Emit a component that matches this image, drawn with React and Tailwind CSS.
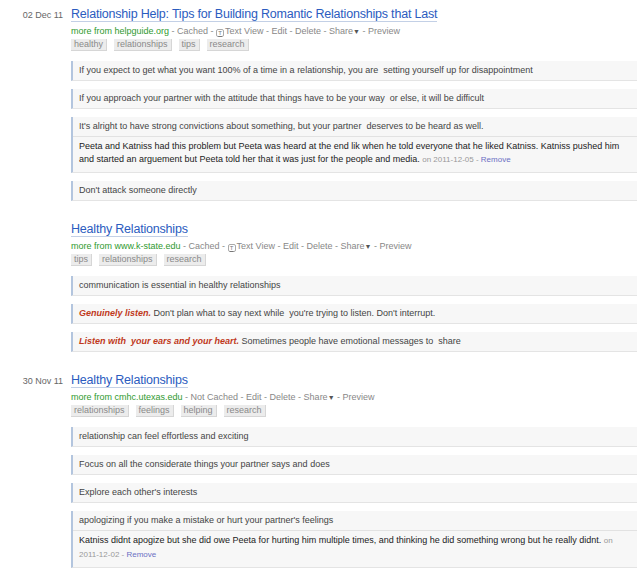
import React from 'react';

// Saved pages with their highlights, newest first
const entries = [
  {
    date: '02 Dec 11',
    title: 'Relationship Help: Tips for Building Romantic Relationships that Last',
    source: 'helpguide.org',
    cached: true,
    textView: true,
    tags: ['healthy', 'relationships', 'tips', 'research'],
    highlights: [
      { text: 'If you expect to get what you want 100% of a time in a relationship, you are\u00a0 setting yourself up for disappointment' },
      { text: 'If you approach your partner with the attitude that things have to be your way\u00a0 or else, it will be difficult' },
      {
        text: "It's alright to have strong convictions about something, but your partner\u00a0 deserves to be heard as well.",
        note: {
          text: 'Peeta and Katniss had this problem but Peeta was heard at the end lik when he told everyone that he liked Katniss. Katniss pushed him and started an arguement but Peeta told her that it was just for the people and media.',
          on: '2011-12-05',
        },
      },
      { text: "Don't attack someone directly" },
    ],
  },
  {
    date: '',
    title: 'Healthy Relationships',
    source: 'www.k-state.edu',
    cached: true,
    textView: true,
    tags: ['tips', 'relationships', 'research'],
    highlights: [
      { text: 'communication is essential in healthy relationships' },
      { em: 'Genuinely listen.', text: " Don't plan what to say next while\u00a0 you're trying to listen. Don't interrupt." },
      { em: 'Listen with\u00a0 your ears and your heart.', text: ' Sometimes people have emotional messages to\u00a0 share' },
    ],
  },
  {
    date: '30 Nov 11',
    title: 'Healthy Relationships',
    source: 'cmhc.utexas.edu',
    cached: false,
    textView: false,
    tags: ['relationships', 'feelings', 'helping', 'research'],
    highlights: [
      { text: 'relationship can feel effortless and exciting' },
      { text: 'Focus on all the considerate things your partner says and does' },
      { text: "Explore each other's interests" },
      {
        text: "apologizing if you make a mistake or hurt your partner's feelings",
        note: {
          text: 'Katniss didnt apogize but she did owe Peeta for hurting him multiple times, and thinking he did something wrong but he really didnt.',
          on: '2011-12-02',
        },
      },
    ],
  },
];

const TextViewIcon = () => (
  <span className="inline-flex items-center justify-center w-[8px] h-[8px] mr-[1px] align-[-1px] rounded-[2px] border border-[#aaa] text-[6px] leading-none text-[#777] underline">
    T
  </span>
);

const MetaLine = ({ source, cached, textView }) => (
  <div className="mt-[4px] h-[11px] text-[9px] leading-[11px] text-[#888] whitespace-nowrap">
    <span className="text-[#2f9a2f]">more from {source}</span>
    {cached ? ' - Cached - ' : ' - Not Cached - '}
    {textView && (
      <>
        <TextViewIcon />
        Text View -{' '}
      </>
    )}
    Edit - Delete - Share
    <span className="text-[7px] text-[#555]">▼</span> - Preview
  </div>
);

const Tag = ({ label }) => (
  <span className="px-[3px] bg-[#ececec] border-r border-b border-[#d6d6d6] text-[9px] leading-[11px] text-[#8a8a8a]">
    {label}
  </span>
);

const Highlight = ({ item }) => (
  <div className="border-l-2 border-[#b3c5de] bg-[#f7f7f7] border-b border-b-[#e4e4e4]">
    <div className="px-[6px] py-[4px] text-[9px] leading-[11px] text-[#444]">
      {item.em && <em className="font-bold text-[#c0391c]">{item.em}</em>}
      {item.text}
    </div>
    {item.note && (
      <div className="border-t border-[#e2e2e2] pl-[6px] pr-[10px] pt-[3px] pb-[6px] text-[9px] leading-[12.5px] text-[#222]">
        {item.note.text}{' '}
        <span className="text-[8px] text-[#999]">
          on {item.note.on} - <span className="text-[#6b70c4]">Remove</span>
        </span>
      </div>
    )}
  </div>
);

const Entry = ({ entry }) => (
  <div className="flex">
    <div className="w-[71px] shrink-0 pr-[8px] text-right text-[9px] leading-[14px] text-[#666]">
      {entry.date}
    </div>
    <div className="flex-1 min-w-0 pr-[3px]">
      <div className="flex">
        <span className="text-[12.5px] leading-[13px] tracking-[-0.2px] text-[#2b5cc0] border-b border-[#c3d0e6]">
          {entry.title}
        </span>
      </div>
      <MetaLine source={entry.source} cached={entry.cached} textView={entry.textView} />
      <div className="mt-[2px] flex gap-[7px]">
        {entry.tags.map((t) => (
          <Tag key={t} label={t} />
        ))}
      </div>
      <div className="mt-[10px] flex flex-col gap-[8px]">
        {entry.highlights.map((h, i) => (
          <Highlight key={i} item={h} />
        ))}
      </div>
    </div>
  </div>
);

export default function App() {
  return (
    <div className="w-[640px] h-[570px] overflow-hidden bg-white pt-[8px] font-['Liberation_Sans',Arial,sans-serif]">
      <div className="flex flex-col gap-[22px]">
        {entries.map((e, i) => (
          <Entry key={i} entry={e} />
        ))}
      </div>
    </div>
  );
}
